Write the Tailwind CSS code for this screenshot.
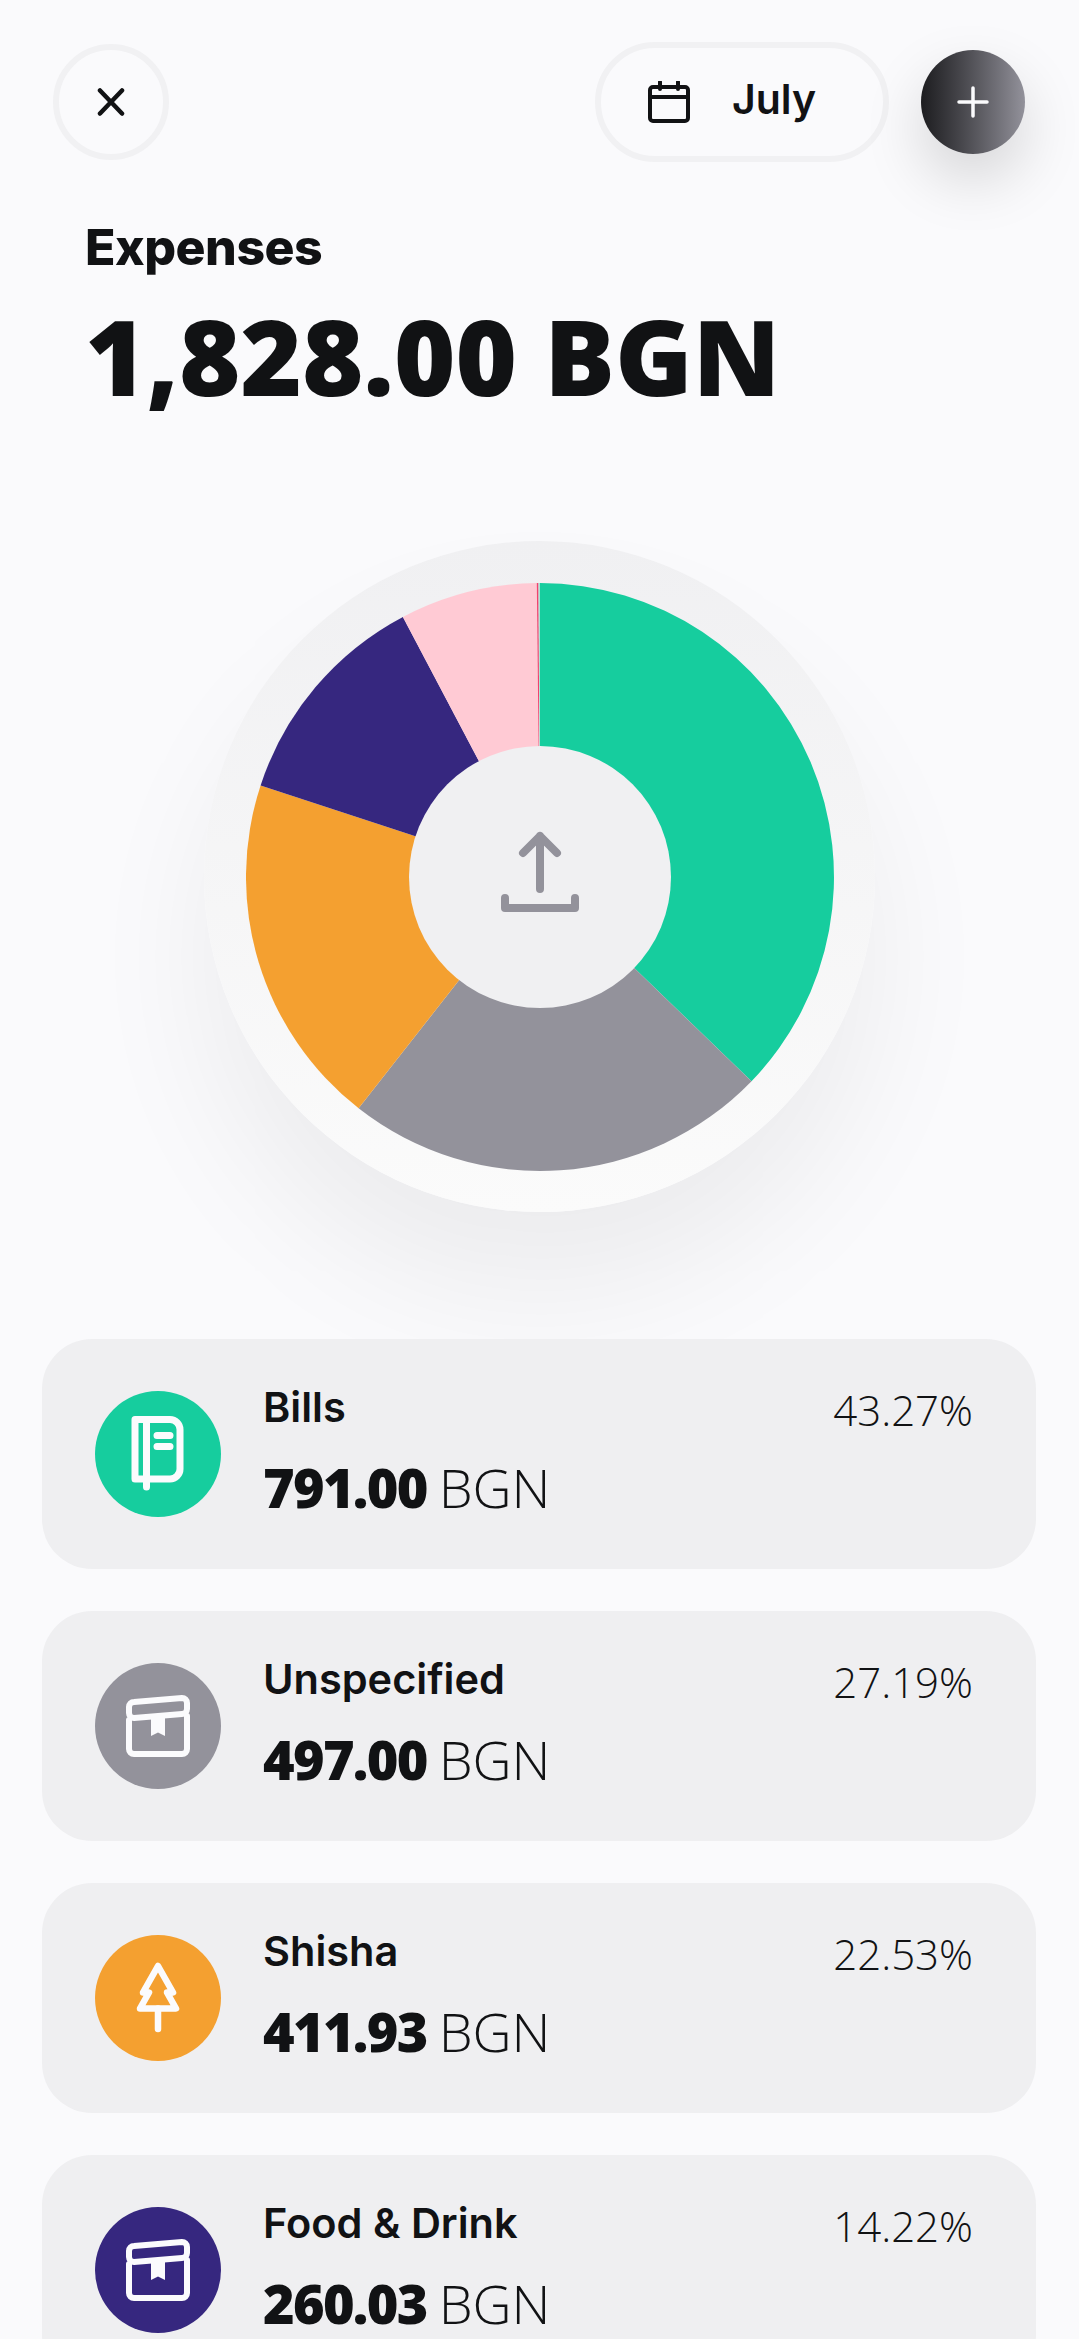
<!DOCTYPE html>
<html>
<head>
<meta charset="utf-8">
<script src="https://cdn.jsdelivr.net/npm/@tailwindcss/browser@4"></script>
</head>
<body class="bg-[#fafafc]">
<div class="w-[1079px] h-[2339px] overflow-hidden bg-[#fafafc] text-[#111214] font-['Open_Sans',sans-serif]">
  <header class="flex items-center justify-between pl-[53px] pr-[54px] pt-[42px]">
    <button class="w-[116px] h-[116px] rounded-full border-[6px] border-[#f1f1f3] flex items-center justify-center">
      <svg width="30" height="28" viewBox="0 0 30 28" fill="none" stroke="#111214" stroke-width="4.5" stroke-linecap="round"><path d="M4 2.5 26 25.5M26 2.5 4 25.5"/></svg>
    </button>
    <div class="flex items-center gap-[32px]">
      <div class="w-[294px] h-[120px] rounded-full border-[6px] border-[#f1f1f3] flex items-center pl-[47px] gap-[42px]">
        <svg width="42" height="42" viewBox="0 0 42 42" fill="none" stroke="#111214" stroke-width="4" stroke-linejoin="round" stroke-linecap="round"><rect x="2" y="6" width="38" height="34" rx="3"/><path d="M2 16H40M12 1V8M30 1V8"/></svg>
        <span class="font-['Inter',sans-serif] font-semibold text-[41px] leading-none -mt-[6px]">July</span>
      </div>
      <button class="w-[104px] h-[104px] rounded-full bg-gradient-to-r from-[#1d1d20] to-[#93929b] shadow-[0_26px_60px_rgba(0,0,0,0.15)] flex items-center justify-center">
        <svg width="32" height="32" viewBox="0 0 32 32" fill="none" stroke="#fbfbfd" stroke-width="3.5" stroke-linecap="round"><path d="M16 2V30M2 16H30"/></svg>
      </button>
    </div>
  </header>

  <section class="pl-[85px] pt-[56px]">
    <h2 class="font-['Inter',sans-serif] font-extrabold text-[50px] leading-[58px] tracking-[-0.5px]">Expenses</h2>
    <p class="font-extrabold text-[105px] leading-[110px] mt-[25px]">1,828.00 BGN</p>
  </section>

  <section class="flex justify-center pt-[130px]">
    <div class="w-[671px] h-[671px] rounded-full bg-gradient-to-b from-[#f0f0f2] to-[#fbfbfb] shadow-[0_80px_130px_rgba(0,0,0,0.06)] flex items-center justify-center">
      <svg width="588" height="588" viewBox="-294 -294 588 588">
        <path d="M0 0V-294A294 294 0 0 1 211.5 204.2Z" fill="#16cd9e"/>
        <path d="M0 0L211.5 204.2A294 294 0 0 1 -181.4 231.3Z" fill="#93929b"/>
        <path d="M0 0L-181.4 231.3A294 294 0 0 1 -279.4 -91.6Z" fill="#f4a030"/>
        <path d="M0 0L-279.4 -91.6A294 294 0 0 1 -137.1 -260.1Z" fill="#36277f"/>
        <path d="M0 0L-137.1 -260.1A294 294 0 0 1 -3.2 -294Z" fill="#ffcad4"/>
        <path d="M0 0L-3.2 -294H-1.5Z" fill="#f0436f"/>
        <path d="M0 0L-1.5 -294H0Z" fill="#a5e6d6"/>
        <circle r="131" fill="#f0f0f2"/>
        <path d="M0 12V-41M-17 -24 0 -41 17 -24" fill="none" stroke="#93929b" stroke-width="8" stroke-linecap="round" stroke-linejoin="round"/>
        <path d="M-35 21V31H35V21" fill="none" stroke="#93929b" stroke-width="8" stroke-linecap="round" stroke-linejoin="round"/>
      </svg>
    </div>
  </section>

  <section class="relative flex flex-col gap-[42px] pl-[42px] pr-[43px] pt-[127px]">
    <article class="h-[230px] rounded-[50px] bg-[#efeff1] flex items-center pl-[53px] pr-[63px]">
      <svg class="shrink-0" width="126" height="126" viewBox="0 0 126 126">
        <circle cx="63" cy="63" r="63" fill="#16cd9e"/>
        <g fill="none" stroke="#fbfbfd" stroke-width="7" stroke-linecap="round" stroke-linejoin="round">
          <path d="M40 28.5H75A10 10 0 0 1 85 38.5V78A10 10 0 0 1 75 88H40Z"/>
          <path d="M51.5 28.5V96"/>
          <path d="M62 44.5H75M62 55.5H75"/>
        </g>
      </svg>
      <div class="ml-[42px] flex-1">
        <h3 class="font-['Inter',sans-serif] font-semibold text-[41.5px] leading-[48px] -mt-[9px]">Bills</h3>
        <p class="text-[54px] leading-[60px] mt-[26px] font-[350]"><span class="font-extrabold tracking-[-1.7px] mr-[-2px]">791.00</span> BGN</p>
      </div>
      <span class="self-start mt-[47px] font-[350] text-[42px] leading-[48px]">43.27%</span>
    </article>
    <article class="h-[230px] rounded-[50px] bg-[#efeff1] flex items-center pl-[53px] pr-[63px]">
      <svg class="shrink-0" width="126" height="126" viewBox="0 0 126 126">
        <circle cx="63" cy="63" r="63" fill="#93929b"/>
        <g fill="none" stroke="#fbfbfd" stroke-width="6" stroke-linecap="round" stroke-linejoin="round">
          <path d="M39 39 87 35A5 5 0 0 1 92 40V46A5 5 0 0 1 87 51L39 55A5 5 0 0 1 34 50V44A5 5 0 0 1 39 39Z"/>
          <path d="M34 57V86A5 5 0 0 0 39 91H87A5 5 0 0 0 92 86V53"/>
        </g>
        <path d="M56 52H70V73L63 69.5 56 73Z" fill="#fbfbfd"/>
      </svg>
      <div class="ml-[42px] flex-1">
        <h3 class="font-['Inter',sans-serif] font-semibold text-[41.5px] leading-[48px] -mt-[9px]">Unspecified</h3>
        <p class="text-[54px] leading-[60px] mt-[26px] font-[350]"><span class="font-extrabold tracking-[-1.7px] mr-[-2px]">497.00</span> BGN</p>
      </div>
      <span class="self-start mt-[47px] font-[350] text-[42px] leading-[48px]">27.19%</span>
    </article>
    <article class="h-[230px] rounded-[50px] bg-[#efeff1] flex items-center pl-[53px] pr-[63px]">
      <svg class="shrink-0" width="126" height="126" viewBox="0 0 126 126">
        <circle cx="63" cy="63" r="63" fill="#f4a030"/>
        <g fill="none" stroke="#fbfbfd" stroke-width="6.5" stroke-linecap="round" stroke-linejoin="round">
          <path d="M63 31 78 57.5H72L81 73.5H45L54 57.5H48Z"/>
          <path d="M63 73.5V94"/>
        </g>
      </svg>
      <div class="ml-[42px] flex-1">
        <h3 class="font-['Inter',sans-serif] font-semibold text-[41.5px] leading-[48px] -mt-[9px]">Shisha</h3>
        <p class="text-[54px] leading-[60px] mt-[26px] font-[350]"><span class="font-extrabold tracking-[-1.7px] mr-[-2px]">411.93</span> BGN</p>
      </div>
      <span class="self-start mt-[47px] font-[350] text-[42px] leading-[48px]">22.53%</span>
    </article>
    <article class="h-[230px] rounded-[50px] bg-[#efeff1] flex items-center pl-[53px] pr-[63px]">
      <svg class="shrink-0" width="126" height="126" viewBox="0 0 126 126">
        <circle cx="63" cy="63" r="63" fill="#36277f"/>
        <g fill="none" stroke="#fbfbfd" stroke-width="6" stroke-linecap="round" stroke-linejoin="round">
          <path d="M39 39 87 35A5 5 0 0 1 92 40V46A5 5 0 0 1 87 51L39 55A5 5 0 0 1 34 50V44A5 5 0 0 1 39 39Z"/>
          <path d="M34 57V86A5 5 0 0 0 39 91H87A5 5 0 0 0 92 86V53"/>
        </g>
        <path d="M56 52H70V73L63 69.5 56 73Z" fill="#fbfbfd"/>
      </svg>
      <div class="ml-[42px] flex-1">
        <h3 class="font-['Inter',sans-serif] font-semibold text-[41.5px] leading-[48px] -mt-[9px]">Food &amp; Drink</h3>
        <p class="text-[54px] leading-[60px] mt-[26px] font-[350]"><span class="font-extrabold tracking-[-1.7px] mr-[-2px]">260.03</span> BGN</p>
      </div>
      <span class="self-start mt-[47px] font-[350] text-[42px] leading-[48px]">14.22%</span>
    </article>
  </section>
</div>
</body>
</html>
